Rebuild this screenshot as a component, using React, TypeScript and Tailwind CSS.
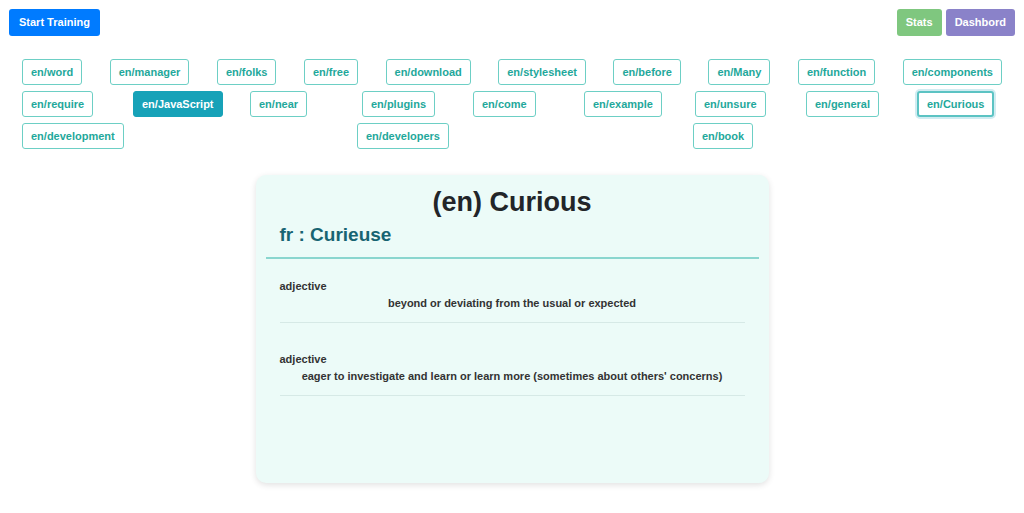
const row1 = [
  "en/word",
  "en/manager",
  "en/folks",
  "en/free",
  "en/download",
  "en/stylesheet",
  "en/before",
  "en/Many",
  "en/function",
  "en/components",
];

const row2 = [
  "en/require",
  "en/JavaScript",
  "en/near",
  "en/plugins",
  "en/come",
  "en/example",
  "en/unsure",
  "en/general",
  "en/Curious",
];

const row3 = ["en/development", "en/developers", "en/book"];

const meanings = [
  { type: "adjective", text: "beyond or deviating from the usual or expected" },
  {
    type: "adjective",
    text: "eager to investigate and learn or learn more (sometimes about others' concerns)",
  },
];

function Chip({ label }: { label: string }) {
  const active = label === "en/JavaScript";
  const focused = label === "en/Curious";
  let cls =
    "h-[26px] px-[8px] rounded-[3px] text-[11px] font-bold leading-none whitespace-nowrap border ";
  if (active) cls += "bg-[#17a2b8] border-[#17a2b8] text-white";
  else if (focused)
    cls +=
      "bg-white border-2 border-[#5cc3c3] text-[#1fa89b] shadow-[0_0_0_2px_rgba(23,162,184,0.2)]";
  else cls += "bg-white border-[#6dcfc5] text-[#1fa89b]";
  return <button className={cls}>{label}</button>;
}

export default function App() {
  return (
    <div className="min-h-screen bg-white font-['Liberation_Sans',Arial,sans-serif]">
      <div className="flex justify-between px-[9px] pt-[9px]">
        <button className="h-[27px] px-[10px] rounded-[3px] bg-[#007bff] text-white text-[11px] font-bold">
          Start Training
        </button>
        <div className="flex gap-[4px]">
          <button className="h-[27px] px-[9px] rounded-[3px] bg-[#7fc77f] text-white text-[11px] font-bold">
            Stats
          </button>
          <button className="h-[27px] px-[9px] rounded-[3px] bg-[#8a82c9] text-white text-[11px] font-bold">
            Dashbord
          </button>
        </div>
      </div>

      <div className="mt-[23px] px-[22px]">
        <div className="flex justify-between">
          {row1.map((w) => (
            <Chip key={w} label={w} />
          ))}
        </div>
        <div className="mt-[5.5px] grid grid-cols-[111px_117px_112px_111px_111px_111px_111px_111px_auto]">
          {row2.map((w) => (
            <div key={w}>
              <Chip label={w} />
            </div>
          ))}
        </div>
        <div className="mt-[5.5px] grid grid-cols-[335px_336px_auto]">
          {row3.map((w) => (
            <div key={w}>
              <Chip label={w} />
            </div>
          ))}
        </div>
      </div>

      <div className="mx-auto mt-[26px] w-[513px] h-[308px] rounded-[10px] bg-[#ecfbf8] shadow-[0_2px_6px_rgba(0,0,0,0.12)] pt-[12px]">
        <h1 className="text-center text-[27px] font-bold leading-[30px] text-[#222529]">
          (en) Curious
        </h1>
        <h2 className="mt-[6px] px-[24px] text-[19px] font-bold leading-[24px] text-[#176472]">
          fr : Curieuse
        </h2>
        <div className="mx-[10px] mt-[10px] h-[2px] bg-[#8ad6cf]" />
        <div className="px-[24px] pt-[20px]">
          {meanings.map((m, i) => (
            <div key={i} className={i > 0 ? "mt-[29px]" : ""}>
              <div className="text-[11px] font-bold leading-[14px] text-[#333]">
                {m.type}
              </div>
              <div className="mt-[3px] text-center text-[11px] font-bold leading-[14px] text-[#333]">
                {m.text}
              </div>
              <div className="mt-[12px] h-px bg-[#d6e9e6]" />
            </div>
          ))}
        </div>
      </div>
    </div>
  );
}
